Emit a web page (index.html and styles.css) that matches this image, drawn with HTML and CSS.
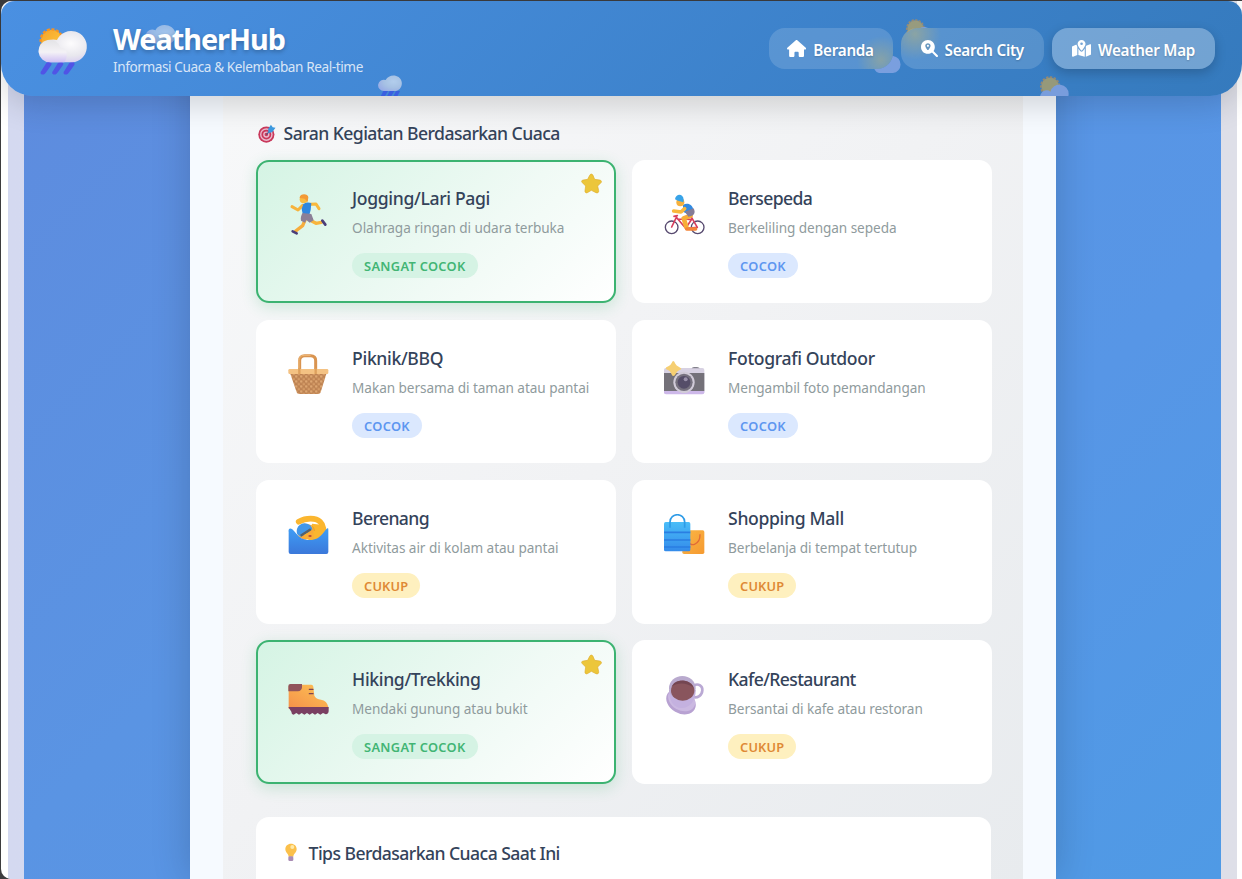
FILE: index.html
```html
<!DOCTYPE html>
<html lang="id">
<head>
<meta charset="utf-8">
<title>WeatherHub</title>
<link rel="stylesheet" href="styles.css">
</head>
<body>
<svg class="defs" width="0" height="0" aria-hidden="true">
  <defs>
    <radialGradient id="gCloud" cx=".65" cy=".4" r=".7"><stop offset="0" stop-color="#fdfcfd"/><stop offset=".55" stop-color="#e9e8ee"/><stop offset="1" stop-color="#d3c6f2"/></radialGradient>
    <linearGradient id="gCloud2" x1="0" y1="0" x2="0" y2="1"><stop offset="0" stop-color="#e3e3e6"/><stop offset=".55" stop-color="#f4f2f6"/><stop offset="1" stop-color="#cfbff4"/></linearGradient>
    <linearGradient id="gSun" x1="0" y1="0" x2="1" y2="1"><stop offset="0" stop-color="#f6a32c"/><stop offset="1" stop-color="#fdcb3d"/></linearGradient>
    <linearGradient id="gWater" x1="0" y1="0" x2="0" y2="1"><stop offset="0" stop-color="#3f9df5"/><stop offset="1" stop-color="#3b78da"/></linearGradient>
    <linearGradient id="gBoot" x1="0" y1="1" x2="1" y2="0"><stop offset="0" stop-color="#f5914a"/><stop offset="1" stop-color="#fdc354"/></linearGradient>
    <linearGradient id="gBag" x1="0" y1="0" x2="0" y2="1"><stop offset="0" stop-color="#49bdf8"/><stop offset="1" stop-color="#348bea"/></linearGradient>
    <linearGradient id="gBag2" x1="0" y1="0" x2="1" y2="1"><stop offset="0" stop-color="#fbb645"/><stop offset="1" stop-color="#f59a31"/></linearGradient>
    <pattern id="weave" width="15" height="15" patternUnits="userSpaceOnUse"><rect width="15" height="15" fill="#bd8252"/><circle cx="3.750" cy="3.750" r="4" fill="#dda671"/><circle cx="11.250" cy="11.250" r="4" fill="#d69c67"/></pattern>
  </defs>
  <symbol id="sun-rain" viewBox="114 81 153 144">
    <circle cx="155" cy="121" r="32" fill="url(#gSun)"/>
    <circle cx="155" cy="121" r="33" fill="none" stroke="#f59324" stroke-width="7" stroke-dasharray="9 5"/>
    <path d="M123 222a7 7 0 0 1 1-9l13-21c4-8 22-8 17 3l-15 21c-4 7-11 10-16 6zM158 222a7 7 0 0 1 1-9l13-21c4-8 22-8 17 3l-15 21c-4 7-11 10-16 6zM192 222a7 7 0 0 1 1-9l13-21c4-8 22-8 17 3l-15 21c-4 7-11 10-16 6z" fill="#5054e6"/>
    <path d="M171 120A47 47 0 1 1 217 187H150a33 33 0 1 1 21-67z" fill="url(#gCloud)"/>
    <path d="M150 187a34 34 0 1 1 32-44c20 0 24 23 11 44z" fill="url(#gCloud2)"/>
  </symbol>
  <symbol id="cloud" viewBox="0 0 96 60">
    <path d="M24 60a22 22 0 1 1 8-42C45-6 88-2 94 27c4 18-8 33-24 33z" fill="url(#gCloud)"/>
  </symbol>
  <symbol id="rain" viewBox="0 0 72 72">
    <path d="M5 70l11-22h14L17 70zM24 70l11-22h14L36 70zM43 70l11-22h12L55 70z" fill="#3645e8"/>
    <path d="M18 48A17 17 0 1 1 23 15C33-5 66-3 71 20c3 16-8 28-21 28z" fill="url(#gCloud)"/>
  </symbol>
  <symbol id="sun-cloud" viewBox="0 0 84 76">
    <circle cx="31" cy="29" r="25" fill="#f3b534"/><circle cx="31" cy="29" r="26" fill="none" stroke="#ed9328" stroke-width="5" stroke-dasharray="7 4"/>
    <path d="M18 76a18 18 0 1 1 14-32A26 26 0 1 1 60 76z" fill="#b9bdf6"/>
  </symbol>
  <symbol id="star" viewBox="993 189 66 66">
    <path d="M1019 196c2-5 8-5 10 0l5 12 15 2c6 1 7 6 3 9l-9 9 3 14c1 6-4 8-8 6l-14-7-12 7c-4 2-8-1-7-6l2-14-10-10c-4-3-2-8 3-8l13-2z" fill="#ecc63a" stroke="#dfae2d" stroke-width="2"/>
  </symbol>
  <symbol id="target" viewBox="771 372 54 54">
    <circle cx="799" cy="402" r="23" fill="#c9385b"/><circle cx="799" cy="402" r="16" fill="none" stroke="#eab9cb" stroke-width="4"/><circle cx="799" cy="402" r="7" fill="none" stroke="#eab9cb" stroke-width="4"/>
    <path d="M799 402l13-14" stroke="#4b5785" stroke-width="3"/><path d="M804 386l8-12 5 7 8 2-9 12-11 3z" fill="#3d9ae0"/>
  </symbol>
  <symbol id="bulb" viewBox="96 625 54 57">
    <path d="M123 627c-10 0-17 7-17 16 0 11 9 13 10 23h14c1-10 10-12 10-23 0-9-7-16-17-16z" fill="#fbc04b"/><circle cx="127" cy="637" r="6" fill="#ffe9a8"/><rect x="115" y="665" width="15" height="14" rx="4" fill="#a98cb4"/>
  </symbol>
  <symbol id="runner" viewBox="111 252 126 126">
    <g fill="none" stroke-linecap="round" stroke-linejoin="round">
      <path d="M158 286l-14 14-18-10" stroke="#f6b33d" stroke-width="9"/>
      <path d="M180 283l18-1 9 14" stroke="#f9b93c" stroke-width="9"/>
      <path d="M166 328l-8 19-21 16" stroke="#f6ad3c" stroke-width="10"/>
      <path d="M185 333l13 7 16-3" stroke="#f8b43c" stroke-width="10"/>
      <path d="M217 332l9 12M128 364l12 6" stroke="#4b3d78" stroke-width="8"/>
    </g>
    <path d="M160 283c5-6 17-7 24-3l-2 20-4 14-20-2-3-16z" fill="#2f86df"/>
    <path d="M158 309l26 3 7 19-12 7-10-8-4 8-12-6c-2-9 1-17 5-23z" fill="#8b7f97"/>
    <circle cx="161" cy="268" r="12" fill="#f9bb43"/><path d="M149 264c-1-14 25-15 26-2l-2 14-9-10z" fill="#f39a36"/>
  </symbol>
  <symbol id="cyclist" viewBox="99 132 126 126">
    <g fill="none" stroke-linecap="round" stroke-linejoin="round">
      <circle cx="125" cy="232" r="19" stroke="#584b70" stroke-width="4"/><circle cx="203" cy="232" r="19" stroke="#584b70" stroke-width="4"/>
      <path d="M125 231l14-29 28 33 18-27-42-1M132 199l10-2M185 203l17 29-35 4" stroke="#d8405e" stroke-width="5"/>
      <path d="M182 197l-21 8 8 26" stroke="#f7ad36" stroke-width="14"/>
      <path d="M170 237l27 0" stroke="#f3853a" stroke-width="10"/>
    </g>
    <path d="M159 165c14-9 30 0 31 16l-12 14-19-10z" fill="#328ae1"/><path d="M191 175c7 14 1 24-16 25l-10-15z" fill="#857c96"/>
    <path d="M164 176l-11 10-22-3" fill="none" stroke="#f9b83c" stroke-width="11" stroke-linecap="round" stroke-linejoin="round"/>
    <circle cx="151" cy="157" r="12" fill="#f7b13d"/><path d="M135 148c2-18 25-19 26 1l-1 8-16-5z" fill="#38a3e8"/>
  </symbol>
  <symbol id="basket" viewBox="21 41 126 126">
    <path d="M59 90V61c0-10 6-15 15-15h18c9 0 15 5 15 15v29" fill="none" stroke="#d99450" stroke-width="9"/><path d="M57 88V60c0-9 6-15 15-15h20" fill="none" stroke="#efb876" stroke-width="3"/>
    <path d="M30 98h110l-18 58c-1 4-4 5-7 5H58c-4 0-7-1-8-5z" fill="url(#weave)"/>
    <rect x="25" y="86" width="120" height="15" rx="4" fill="#f4c283"/><path d="M58 84v17M107 84v17" stroke="#dda05d" stroke-width="7"/>
  </symbol>
  <symbol id="camera" viewBox="24 27 126 126">
    <rect x="27" y="69" width="121" height="78" rx="6" fill="#d7d1e2"/><path d="M110 70c2-5 21-5 24 0z" fill="#82808b"/><rect x="27" y="84" width="121" height="54" fill="#747179"/><path d="M27 138h121v4q0 6-6 6H33q-6 0-6-6z" fill="#cdb8e9"/>
    <circle cx="87" cy="112" r="32" fill="#d1cbd8"/><circle cx="87" cy="112" r="26" fill="#77727f"/><circle cx="87" cy="112" r="19" fill="#554d68"/><circle cx="92" cy="103" r="6" fill="#9990a9"/>
    <path d="M55 48q3 0 6 8 3 6 10 9 8 4 8 6t-7 5q-7 3-10 11-3 6-7 6t-6-7q-3-7-9-10-8-3-8-6t8-6q7-3 10-10 2-6 5-6z" fill="#f6cf72"/>
  </symbol>
  <symbol id="swimmer" viewBox="21 27 126 126">
    <path d="M96 56l36 4 6 58H82z" fill="#fbb62f"/>
    <path d="M56 50C78 38 108 38 120 50c11 10 12 26 12 58" fill="none" stroke="#fbb62f" stroke-width="17" stroke-linecap="round" stroke-linejoin="round"/>
    <path d="M86 60c12 1 16 8 17 18" fill="none" stroke="#e99a2c" stroke-width="3"/>
    <circle cx="76" cy="80" r="24" fill="#f8a938"/>
    <path d="M52 88c-8-22 12-39 30-32 9 3 14 10 15 17L63 95z" fill="#4196e8"/><path d="M62 92l30-19" stroke="#54616b" stroke-width="7"/>
    <path d="M26 82c-2-10 3-14 10-10 8 6 16 20 28 28 12 6 24 6 34 4 16-1 26-12 38-28 8-9 9-7 9-1v66q0 6-6 6H32q-6 0-6-6z" fill="url(#gWater)"/>
    <path d="M72 91c4-8 24-10 31-3l-3 14q-15 5-28-4z" fill="#faae35"/><ellipse cx="90" cy="93" rx="5" ry="3" fill="#b54a3c"/>
  </symbol>
  <symbol id="shopping" viewBox="24 27 126 126">
    <rect x="82" y="76" width="66" height="71" rx="5" fill="url(#gBag2)"/><path d="M101 108c0 18 35 15 34-20" fill="none" stroke="#e16b38" stroke-width="4"/>
    <rect x="27" y="51" width="79" height="88" rx="5" fill="url(#gBag)"/><path d="M27 82h79M27 105h79M27 126h79" stroke="#2a7ee2" stroke-width="5"/>
    <path d="M45 68V51c0-29 44-29 44 0v17" fill="none" stroke="#2d9be7" stroke-width="5"/>
  </symbol>
  <symbol id="boot" viewBox="111 117 126 126">
    <path d="M117 149h67q5 0 6 6l3 27q5 10 20 12 18 3 22 22v5H116v-66q0-5 5-6z" fill="url(#gBoot)"/>
    <path d="M117 147h39v10q-1 11-12 12h-29v-16q0-6 6-6z" fill="#91545b"/><path d="M178 163h11M178 176h11" stroke="#7b4351" stroke-width="4" stroke-linecap="round"/>
    <path d="M115 216h121v12q0 9-9 10l-8-4-8 5-8-5-8 5-8-5-8 5-8-5-8 5-8-5-8 5-8-5-8 5q-7-1-7-9z" fill="#7a3f62"/>
  </symbol>
  <symbol id="cup" viewBox="24 27 126 126">
    <ellipse cx="78" cy="110" rx="47" ry="35" transform="rotate(30 78 110)" fill="#b8a2d2"/><ellipse cx="80" cy="104" rx="43" ry="32" transform="rotate(30 80 104)" fill="#cbb9e1"/>
    <path d="M117 61c14-7 26 3 25 15-1 15-14 24-28 20" fill="none" stroke="#baa9d4" stroke-width="8"/>
    <path d="M42 75c0 30 12 54 38 54s43-24 42-54z" fill="#c4b1df"/><ellipse cx="82" cy="70" rx="40" ry="37" fill="#b9aace"/><ellipse cx="83" cy="77" rx="35" ry="30" fill="#89555d"/>
    <path d="M50 65c11-26 57-24 66 4-16-16-49-18-66-4z" fill="#744652"/>
  </symbol>
</svg>

<header class="header">
  <svg class="float float-cloud"><use href="#cloud"/></svg>
  <svg class="float float-rain"><use href="#rain"/></svg>
  <svg class="float float-sun-a"><use href="#sun-cloud"/></svg>
  <svg class="float float-sun-b"><use href="#sun-cloud"/></svg>
  <svg class="float float-sun-c"><use href="#sun-cloud"/></svg>
  <div class="brand">
    <svg class="logo"><use href="#sun-rain"/></svg>
    <div>
      <h1 class="brand-name">WeatherHub</h1>
      <p class="brand-sub">Informasi Cuaca &amp; Kelembaban Real-time</p>
    </div>
  </div>
  <nav class="nav">
    <a class="nav-link nav-home">
      <svg class="nav-icon" viewBox="0 0 576 512"><path d="M575.800 255.500c0 18-15 32.100-32 32.100h-32l.7 160.200c0 2.700-.2 5.400-.5 8.100V472c0 22.100-17.900 40-40 40H392c-22.100 0-40-17.900-40-40V384c0-17.700-14.300-32-32-32H256c-17.700 0-32 14.300-32 32v88c0 22.100-17.900 40-40 40H104c-22.100 0-40-17.900-40-40V287.600H32c-18 0-32-14-32-32.100c0-9 3-17 10-24L266.400 8c7-7 15-8 22-8s15 2 21 7L564.800 231.500c8 7 12 15 11 24z"/></svg>
      <span>Beranda</span></a>
    <a class="nav-link nav-search">
      <svg class="nav-icon" viewBox="0 0 512 512"><path fill-rule="evenodd" d="M416 208c0 45.900-14.900 88.300-40 122.700L502.600 457.400c12.500 12.500 12.500 32.800 0 45.300s-32.800 12.500-45.300 0L330.700 376c-34.400 25.200-76.800 40-122.700 40C93.100 416 0 322.900 0 208S93.100 0 208 0S416 93.100 416 208zM208 96c-44 0-80 34-80 78 0 42 40 92 65 124 8 9 22 9 30 0 25-32 65-82 65-124 0-44-36-78-80-78zm0 48a32 32 0 1 1 0 64 32 32 0 1 1 0-64z"/></svg>
      <span>Search City</span></a>
    <a class="nav-link nav-map active">
      <svg class="nav-icon" viewBox="0 0 576 512"><path d="M408 120c0 54.600-73.100 151.900-105.200 192c-7.700 9.600-22 9.600-29.600 0C241.100 271.900 168 174.600 168 120C168 53.700 221.700 0 288 0s120 53.700 120 120zm8 80.400c3.500-6.900 6.700-13.800 9.600-20.600c.5-1.200 1-2.500 1.500-3.700l116-46.400C558.900 123.400 576 135 576 152V422.800c0 9.800-6 18.600-15.100 22.300L416 503V200.400zM137.600 138.300c2.400 14.100 7.200 28.300 12.800 41.500c2.900 6.800 6.100 13.700 9.600 20.600V451.800L32.900 502.700C17.100 509 0 497.400 0 480.400V209.600c0-9.800 6-18.600 15.100-22.300l122.600-49zM327.800 332c13.900-17.400 35.700-45.700 56.200-77V504.300L192 449.400V255c20.500 31.300 42.300 59.600 56.200 77c20.500 25.600 59.100 25.600 79.600 0zM288 152a40 40 0 1 0 0-80 40 40 0 1 0 0 80z"/></svg>
      <span>Weather Map</span></a>
  </nav>
</header>

<div class="window">
  <div class="frame">
    <div class="backdrop">
      <main class="container">
        <section class="panel">
          <h2 class="section-title"><svg class="title-icon"><use href="#target"/></svg><span>Saran Kegiatan Berdasarkan Cuaca</span></h2>
          <div class="grid">
            <article class="card best">
              <svg class="star"><use href="#star"/></svg>
              <svg class="card-icon"><use href="#runner"/></svg>
              <div><h3 class="card-title">Jogging/Lari Pagi</h3><p class="card-desc">Olahraga ringan di udara terbuka</p><span class="badge green">SANGAT COCOK</span></div>
            </article>
            <article class="card">
              <svg class="card-icon"><use href="#cyclist"/></svg>
              <div><h3 class="card-title tight">Bersepeda</h3><p class="card-desc">Berkeliling dengan sepeda</p><span class="badge blue">COCOK</span></div>
            </article>
            <article class="card">
              <svg class="card-icon"><use href="#basket"/></svg>
              <div><h3 class="card-title">Piknik/BBQ</h3><p class="card-desc">Makan bersama di taman atau pantai</p><span class="badge blue">COCOK</span></div>
            </article>
            <article class="card">
              <svg class="card-icon"><use href="#camera"/></svg>
              <div><h3 class="card-title">Fotografi Outdoor</h3><p class="card-desc">Mengambil foto pemandangan</p><span class="badge blue">COCOK</span></div>
            </article>
            <article class="card">
              <svg class="card-icon"><use href="#swimmer"/></svg>
              <div><h3 class="card-title tight">Berenang</h3><p class="card-desc">Aktivitas air di kolam atau pantai</p><span class="badge yellow">CUKUP</span></div>
            </article>
            <article class="card">
              <svg class="card-icon"><use href="#shopping"/></svg>
              <div><h3 class="card-title">Shopping Mall</h3><p class="card-desc">Berbelanja di tempat tertutup</p><span class="badge yellow">CUKUP</span></div>
            </article>
            <article class="card best">
              <svg class="star"><use href="#star"/></svg>
              <svg class="card-icon"><use href="#boot"/></svg>
              <div><h3 class="card-title">Hiking/Trekking</h3><p class="card-desc">Mendaki gunung atau bukit</p><span class="badge green">SANGAT COCOK</span></div>
            </article>
            <article class="card">
              <svg class="card-icon"><use href="#cup"/></svg>
              <div><h3 class="card-title tight">Kafe/Restaurant</h3><p class="card-desc">Bersantai di kafe atau restoran</p><span class="badge yellow">CUKUP</span></div>
            </article>
          </div>
          <section class="tips">
            <h2 class="section-title"><svg class="title-icon"><use href="#bulb"/></svg><span>Tips Berdasarkan Cuaca Saat Ini</span></h2>
          </section>
        </section>
      </main>
    </div>
  </div>
</div>
</body>
</html>
```

FILE: styles.css
```css
* { box-sizing: border-box; }
html, body { height: 100%; }
body { margin: 0; padding-top: 1px; overflow: hidden; background: #3c3c3e; font-family: "Noto Sans", "Open Sans", sans-serif; position: relative; }
h1, h2, h3, p { margin: 0; }
.defs { position: absolute; }

.header {
  position: absolute; z-index: 5; top: 1px; left: 1px; right: 0; height: 95.300px;
  display: flex; align-items: center; justify-content: space-between;
  padding: 0 27px 0 37px; border-radius: 14px 14px 32px 32px;
  background: linear-gradient(135deg, #4a90e2, #357abd);
  box-shadow: 0 8px 32px rgba(0, 0, 0, .16);
}
.brand { display: flex; align-items: center; gap: 24px; position: relative; padding-top: 1px; }
.logo { width: 51px; height: 48px; margin-top: 3px; }
.brand-name { font-size: 28.800px; line-height: 36px; font-weight: 700; color: #fff; letter-spacing: -1px; text-shadow: 0 2px 4px rgba(0, 0, 0, .25); }
.brand-sub { font-size: 13.600px; line-height: 20px; color: rgba(255, 255, 255, .8); letter-spacing: -.41px; white-space: nowrap; }
.float { position: absolute; overflow: hidden; }
.float-cloud { left: 144px; top: 23px; width: 31px; height: 20px; opacity: .5; }
.float-rain { left: 377px; top: 74px; width: 24px; height: 24px; opacity: .6; clip-path: inset(0 0 3px 0); }
.float-sun-a { left: 872px; top: 47px; width: 28px; height: 25px; opacity: .5; clip-path: path("M28 0H20V5A16 16 0 0 1 4 21H0V25H28Z"); }
.float-sun-b { left: 904px; top: 18px; width: 28px; height: 25px; opacity: .5; clip-path: path("M-3 0H28V9H13A16 16 0 0 0 -3 25Z"); }
.float-sun-c { left: 1038px; top: 75px; width: 30px; height: 27px; opacity: .5; clip-path: inset(0 0 7px 0); }

.nav { display: flex; gap: 8.500px; }
.nav-link {
  display: flex; align-items: center; justify-content: center; gap: 7px; height: 41px; border-radius: 16px;
  color: #fff; font-size: 15.200px; font-weight: 600; white-space: nowrap;
  background-color: rgba(255, 255, 255, .15); text-shadow: 0 1px 2px rgba(0, 0, 0, .2);
}
.nav-home { width: 124px; background-image: radial-gradient(circle 24px at 112px 32px, rgba(190, 180, 120, .45), transparent); }
.nav-search { width: 142.500px; background-image: radial-gradient(circle 26px at 14px 6px, rgba(190, 180, 120, .5), transparent); }
.nav-map { width: 163px; }
.nav-link.active { background: rgba(255, 255, 255, .3); box-shadow: 0 4px 12px rgba(0, 0, 0, .2); }
.nav-icon { height: 17px; fill: #fff; }
.nav-link span { letter-spacing: -.25px; padding-top: 2px; }

.window { height: 878px; margin-left: 1px; padding: 0 5px 0 7px; background: #fff; border-radius: 10px 0 0 10px; overflow: hidden; }
.frame { height: 100%; padding: 0 16px; background: linear-gradient(90deg, #d4d9f0, #dedfe8); }
.backdrop { height: 100%; background: linear-gradient(135deg, #5e8bde 0%, #5a94e3 40%, #5796e6 70%, #4f9ae5 100%); display: flex; justify-content: center; }
.container { width: 866px; height: 100%; margin-left: 1px; padding: 0 33px; background: #f6faff; box-shadow: 0 0 36px rgba(0, 0, 0, .18); }
.panel { height: 100%; padding: 120px 32px 0 32.600px; background: linear-gradient(135deg, #f8f9fa 0%, #f1f2f4 50%, #e8ebee 100%); }
.section-title { display: flex; align-items: center; gap: 8px; height: 24px; font-size: 17.600px; font-weight: 500; color: #34435a; letter-spacing: -.56px; white-space: nowrap; }
.title-icon { width: 20px; height: 19px; }
.grid { display: grid; grid-template-columns: 360px 360px; grid-auto-rows: 143.800px; gap: 16.400px 16px; margin-top: 14.500px; }
.card { position: relative; display: flex; gap: 23px; padding: 25.500px 31.500px; background: #fff; border-radius: 13px; }
.card.best { padding: 23.500px 29.500px; border: 2px solid #3cb371; background: linear-gradient(135deg, #d5f4e4 0%, #f0faf5 60%, #fff 100%); box-shadow: 0 4px 15px rgba(39, 174, 96, .2); }
.card-icon { flex: none; width: 42px; height: 42px; margin-top: 8.500px; }
.star { position: absolute; right: 10.500px; top: 11.500px; width: 22px; height: 22px; }
.card-title { font-size: 17.600px; line-height: 26px; font-weight: 500; color: #34435a; letter-spacing: -.35px; white-space: nowrap; }
.card-title.tight { letter-spacing: -.62px; }
.card-desc { margin-top: 6px; font-size: 13.600px; line-height: 22px; color: #8f9b9d; letter-spacing: -.06px; white-space: nowrap; }
.badge { display: block; width: fit-content; margin-top: 14px; padding: 0 12px; height: 25px; line-height: 26px; border-radius: 13px; font-size: 12.800px; font-weight: 600; letter-spacing: .32px; }
.green { background: #d5f3e4; color: #42b574; }
.blue { background: #dbe8fe; color: #5d96f0; }
.yellow { background: #fef0bf; color: #df8935; letter-spacing: .15px; }
.tips { margin-top: 33px; height: 90px; padding: 24px 25px 0; background: #fff; border-radius: 13px 13px 0 0; }
```
